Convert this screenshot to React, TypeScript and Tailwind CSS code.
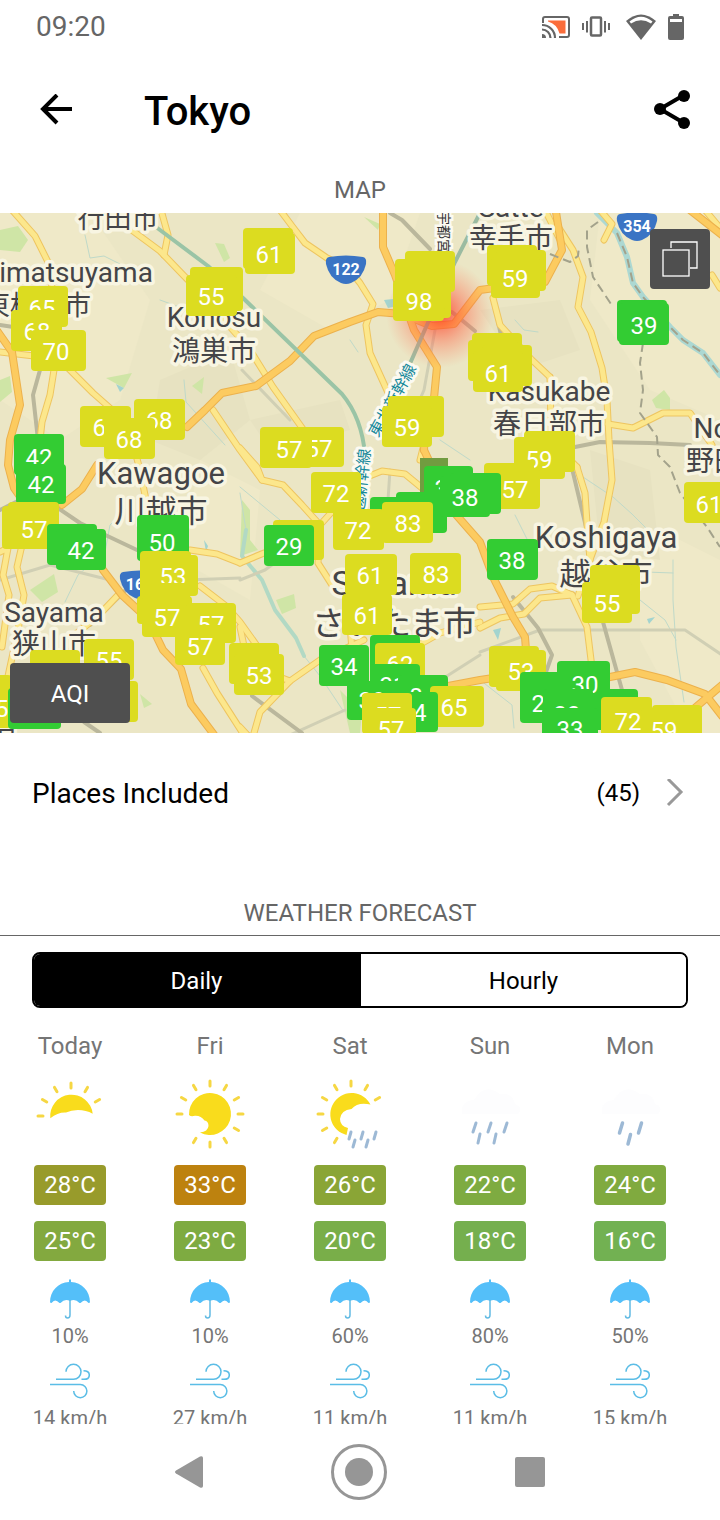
import { useState } from 'react';

type Condition = 'partly' | 'sunny' | 'showers' | 'rain' | 'drizzle';

interface DayForecast {
  day: string;
  condition: Condition;
  high: string;
  highColor: string;
  low: string;
  lowColor: string;
  rain: string;
  wind: string;
}

const forecast: DayForecast[] = [
  { day: 'Today', condition: 'partly', high: '28°C', highColor: 'bg-[#989b2b]', low: '25°C', lowColor: 'bg-[#83a93f]', rain: '10%', wind: '14 km/h' },
  { day: 'Fri', condition: 'sunny', high: '33°C', highColor: 'bg-[#bd820f]', low: '23°C', lowColor: 'bg-[#7eab41]', rain: '10%', wind: '27 km/h' },
  { day: 'Sat', condition: 'showers', high: '26°C', highColor: 'bg-[#8aa536]', low: '20°C', lowColor: 'bg-[#79ae49]', rain: '60%', wind: '11 km/h' },
  { day: 'Sun', condition: 'rain', high: '22°C', highColor: 'bg-[#7eab41]', low: '18°C', lowColor: 'bg-[#75af4e]', rain: '80%', wind: '11 km/h' },
  { day: 'Mon', condition: 'drizzle', high: '24°C', highColor: 'bg-[#80aa3f]', low: '16°C', lowColor: 'bg-[#72b152]', rain: '50%', wind: '15 km/h' },
];

const YELLOW = '#dcdc20';
const GREEN = '#33cc33';
const OLIVE = '#719c40';

interface Pin {
  color: string;
  // each box is [x, y, width, height]
  boxes: number[][];
  value?: string;
  x?: number;
  y?: number;
}

// later pins are stacked on top of earlier ones
const pins: Pin[] = [
  { color: YELLOW, boxes: [[190, 267, 53, 44], [186, 275, 51, 41]], value: '55', x: 211, y: 305 },
  { color: YELLOW, boxes: [[18, 286, 50, 41]], value: '65', x: 42, y: 317 },
  { color: YELLOW, boxes: [[11, 310, 51, 41]], value: '68', x: 37, y: 340 },
  { color: YELLOW, boxes: [[31, 330, 55, 41]], value: '70', x: 56, y: 360 },
  { color: YELLOW, boxes: [[80, 406, 51, 41]], value: '68', x: 106, y: 436 },
  { color: YELLOW, boxes: [[134, 399, 51, 41]], value: '68', x: 159, y: 429 },
  { color: YELLOW, boxes: [[104, 418, 51, 41]], value: '68', x: 129, y: 448 },
  { color: GREEN, boxes: [[14, 434, 50, 41]], value: '42', x: 39, y: 466 },
  { color: GREEN, boxes: [[16, 464, 50, 40]], value: '42', x: 41, y: 493 },
  { color: YELLOW, boxes: [[8, 502, 51, 43], [2, 506, 52, 43]], value: '57', x: 34, y: 538 },
  { color: GREEN, boxes: [[47, 524, 50, 41], [56, 529, 50, 41]], value: '42', x: 81, y: 559 },
  { color: GREEN, boxes: [[137, 515, 52, 46]], value: '50', x: 162, y: 551 },
  { color: YELLOW, boxes: [[140, 551, 51, 41], [147, 555, 51, 41]], value: '53', x: 173, y: 585 },
  { color: YELLOW, boxes: [[140, 583, 50, 41], [137, 596, 50, 28]] },
  { color: YELLOW, boxes: [[142, 596, 50, 41]], value: '57', x: 167, y: 626 },
  { color: YELLOW, boxes: [[186, 603, 50, 40]], value: '57', x: 211, y: 633 },
  { color: YELLOW, boxes: [[175, 625, 50, 40]], value: '57', x: 200, y: 655 },
  { color: YELLOW, boxes: [[229, 643, 50, 41], [234, 654, 50, 41]], value: '53', x: 259, y: 684 },
  { color: YELLOW, boxes: [[84, 639, 50, 41]], value: '55', x: 109, y: 669 },
  { color: YELLOW, boxes: [[30, 650, 50, 41], [88, 681, 50, 41], [-42, 675, 54, 53]], value: '55', x: -5, y: 717 },
  { color: GREEN, boxes: [[8, 688, 53, 41]] },

  { color: YELLOW, boxes: [[243, 228, 50, 41], [245, 233, 50, 41]], value: '61', x: 269, y: 263 },
  { color: YELLOW, boxes: [[405, 251, 50, 41], [395, 259, 50, 41], [401, 277, 50, 41], [395, 270, 50, 41], [393, 280, 51, 41]], value: '98', x: 419, y: 310 },
  { color: YELLOW, boxes: [[388, 396, 56, 41], [382, 406, 50, 41]], value: '59', x: 407, y: 436 },
  { color: YELLOW, boxes: [[294, 427, 50, 40]], value: '57', x: 319, y: 457 },
  { color: YELLOW, boxes: [[260, 427, 52, 41]], value: '57', x: 289, y: 458 },
  { color: OLIVE, boxes: [[420, 458, 28, 41]] },
  { color: GREEN, boxes: [[424, 466, 49, 41]], value: '38', x: 448, y: 497 },
  { color: GREEN, boxes: [[370, 497, 50, 41], [396, 492, 51, 41]] },
  { color: YELLOW, boxes: [[311, 472, 50, 41]], value: '72', x: 336, y: 502 },
  { color: YELLOW, boxes: [[333, 509, 51, 41]], value: '72', x: 358, y: 539 },
  { color: YELLOW, boxes: [[382, 502, 51, 41]], value: '83', x: 408, y: 532 },
  { color: YELLOW, boxes: [[273, 520, 51, 40]] },
  { color: GREEN, boxes: [[264, 525, 50, 41]], value: '29', x: 289, y: 555 },
  { color: YELLOW, boxes: [[345, 554, 52, 41]], value: '61', x: 370, y: 584 },
  { color: YELLOW, boxes: [[410, 553, 51, 41]], value: '83', x: 436, y: 583 },
  { color: YELLOW, boxes: [[342, 594, 50, 41]], value: '61', x: 367, y: 624 },
  { color: GREEN, boxes: [[319, 645, 50, 41]], value: '34', x: 344, y: 675 },
  { color: GREEN, boxes: [[370, 635, 50, 41]] },
  { color: YELLOW, boxes: [[375, 643, 50, 41]], value: '62', x: 400, y: 673 },
  { color: GREEN, boxes: [[370, 664, 50, 41]], value: '31', x: 393, y: 694 },
  { color: GREEN, boxes: [[347, 681, 50, 39]], value: '39', x: 372, y: 709 },
  { color: GREEN, boxes: [[398, 675, 50, 41]], value: '8', x: 416, y: 705 },
  { color: YELLOW, boxes: [[430, 686, 54, 41]], value: '65', x: 454, y: 716 },
  { color: GREEN, boxes: [[388, 692, 50, 40]], value: '34', x: 413, y: 721 },
  { color: YELLOW, boxes: [[362, 693, 50, 41]], value: '57', x: 388, y: 724 },
  { color: YELLOW, boxes: [[366, 708, 50, 41]], value: '57', x: 391, y: 738 },

  { color: YELLOW, boxes: [[487, 245, 50, 41], [496, 250, 50, 41], [491, 257, 49, 41]], value: '59', x: 515, y: 287 },
  { color: YELLOW, boxes: [[472, 333, 50, 41], [468, 340, 50, 41], [482, 345, 50, 41], [473, 351, 50, 41]], value: '61', x: 498, y: 382 },
  { color: GREEN, boxes: [[617, 300, 50, 42], [619, 303, 50, 42]], value: '39', x: 644, y: 334 },
  { color: YELLOW, boxes: [[524, 431, 51, 41], [514, 437, 51, 42]], value: '59', x: 539, y: 468 },
  { color: YELLOW, boxes: [[484, 463, 50, 41], [490, 468, 50, 41]], value: '57', x: 515, y: 498 },
  { color: GREEN, boxes: [[450, 473, 51, 41], [440, 476, 50, 41]], value: '38', x: 465, y: 506 },
  { color: YELLOW, boxes: [[684, 482, 50, 41]], value: '61', x: 709, y: 513 },
  { color: GREEN, boxes: [[487, 539, 51, 41]], value: '38', x: 512, y: 569 },
  { color: YELLOW, boxes: [[590, 565, 50, 49], [582, 582, 50, 41]], value: '55', x: 607, y: 612 },
  { color: YELLOW, boxes: [[489, 646, 50, 41], [496, 650, 50, 41]], value: '53', x: 521, y: 680 },
  { color: GREEN, boxes: [[520, 672, 50, 51], [588, 689, 50, 41]], value: '29', x: 545, y: 712 },
  { color: GREEN, boxes: [[557, 661, 53, 41]], value: '30', x: 585, y: 693 },
  { color: GREEN, boxes: [[543, 689, 50, 41]], value: '33', x: 567, y: 723 },
  { color: GREEN, boxes: [[542, 708, 56, 41]], value: '33', x: 570, y: 738 },
  { color: YELLOW, boxes: [[601, 697, 51, 50]], value: '72', x: 628, y: 730 },
  { color: YELLOW, boxes: [[641, 708, 50, 41], [652, 705, 50, 41]], value: '59', x: 664, y: 739 },
];

const placeLabels = [
  { text: '行田市', x: 118, y: 228, size: 'text-[27px]' },
  { text: 'imatsuyama', x: 76, y: 282, size: 'text-[28px]' },
  { text: '東松山市', x: 37, y: 315, size: 'text-[27px]' },
  { text: 'Konosu', x: 214, y: 327, size: 'text-[28px]' },
  { text: '鴻巣市', x: 214, y: 361, size: 'text-[28px]' },
  { text: 'Satte', x: 511, y: 217, size: 'text-[28px]' },
  { text: '幸手市', x: 511, y: 248, size: 'text-[28px]' },
  { text: 'Kasukabe', x: 549, y: 401, size: 'text-[28px]' },
  { text: '春日部市', x: 549, y: 434, size: 'text-[28px]' },
  { text: 'Noda', x: 727, y: 438, size: 'text-[28px]' },
  { text: '野田市', x: 728, y: 471, size: 'text-[28px]' },
  { text: 'Kawagoe', x: 161, y: 484, size: 'text-[31px]' },
  { text: '川越市', x: 161, y: 522, size: 'text-[31px]' },
  { text: 'Koshigaya', x: 606, y: 548, size: 'text-[31px]' },
  { text: '越谷市', x: 606, y: 585, size: 'text-[31px]' },
  { text: 'Sayama', x: 54, y: 622, size: 'text-[28px]' },
  { text: '狭山市', x: 54, y: 654, size: 'text-[28px]' },
  { text: 'Saitama', x: 394, y: 595, size: 'text-[34px]' },
  { text: 'さいたま市', x: 394, y: 635, size: 'text-[33px]' },
];

const minorRoads = [
  'M12 210L35 236L48 262L54 300',
  'M133 231L160 251L188 280L240 338L252 353L273 387L305 432',
  'M161 210L168 235L164 255',
  'M280 210L292 226L305 243L327 258L348 268L360 283L373 304L366 325L370 353L385 386L398 415',
  'M0 352L34 356',
  'M54 370L50 395L42 422L40 440',
  'M66 366L93 393L110 408L132 440L140 470L146 500',
  'M213 410L240 450L262 480',
  'M240 448L257 467L262 480L283 485L302 505L320 525L318 563L332 585',
  'M320 525L338 505L357 481L382 471L405 474L422 488',
  'M350 560L348 600L352 650',
  'M240 563L264 553',
  'M190 550L217 554L240 563',
  'M0 552L8 548L3 575L9 595L2 647',
  'M22 545L17 567L24 595L18 630L5 690',
  'M120 593L98 616L77 633L60 655',
  'M200 586L226 606L240 622L260 650',
  'M203 668L217 693L242 732',
  'M240 627L248 665L290 681',
  'M364 640L320 660L290 681L260 712L252 740',
  'M410 650L440 633L480 622',
  'M240 727L252 740',
  'M480 607L513 604L530 589L552 586L572 595',
  'M480 628L500 618L524 614L540 598L572 595',
  'M572 595L587 627L592 668',
  'M557 225L573 250L583 277L578 307L591 332L602 368L607 400L609 440L612 480L604 522L588 565L578 596',
  'M577 467L585 493L587 523L590 560',
  'M550 377L551 430L560 450L577 467',
  'M493 298L500 325L532 360L550 377',
  'M608 424L633 428L663 413L690 413L712 445',
  'M545 210L560 240',
  'M600 210L612 224L604 240',
  'M705 210L720 228',
  'M712 275L720 288',
  'M425 440L420 460',
];

const majorRoads = [
  'M-2 332L12 352L20 405L10 440L8 465L14 488L28 508',
  'M62 505L82 489L97 465',
  'M187 427L205 410L222 393L256 386L290 361L314 336L350 322L378 312L402 314L432 326L454 324L480 290L510 286L545 282L562 250L556 212',
  'M383 210L383 247L395 275L414 330L437 367L434 398L426 420L424 450',
  'M424 450L452 510L480 542L493 577L513 617L525 637L526 650',
  'M103 570L122 595L148 619L163 650L181 669L191 704L215 736',
  'M443 687L480 680L500 677',
  'M600 679L635 672L667 680L705 694L722 716',
  'M722 685L690 712L662 736',
  'M690 210L722 235',
];

const greyRoads = [
  'M55 506L80 523L137 550',
  'M390 213L402 220L430 249',
  'M452 312L475 331',
  'M0 325L20 328',
  'M40 370L33 395L38 440',
  'M84 722L100 733',
  'M252 696L302 733',
  'M493 298L502 340',
  'M570 460L592 552',
  'M513 597L538 628L552 655L546 672',
  'M603 622L622 690',
  'M575 447L600 442L650 443L690 445',
  'M0 510L20 500',
  'M130 586L90 625',
];

const lightRoads = [
  'M435 330L424 390L400 445',
  'M242 370L290 420',
  'M480 652L540 630L685 630L722 655',
  'M0 580L50 565L110 580',
  'M390 470L388 500',
  'M240 580L265 570L320 530',
  'M185 580L240 578',
  'M425 690L480 655',
  'M290 735L345 710',
];

const rivers = [
  'M246 530L242 556L262 580L275 610L296 638L304 656',
];

const streams = [
  'M85 235L90 258L104 256L120 264L130 284',
  'M240 493L246 530',
  'M304 656L320 676L344 712',
  'M65 602L78 575L105 552L110 525L135 500',
  'M583 477L613 497L632 514L650 532',
  'M590 570L673 573',
  'M673 560L673 600L676 647L684 702',
  'M515 320L524 330L538 332',
  'M515 515L530 545',
  'M640 600L665 620L676 640',
  'M184 380L186 402L225 445',
  'M160 300L182 308',
  'M350 340L358 352',
  'M282 337L292 346',
  'M480 680L512 705L514 728',
  'M440 440L470 460',
  'M240 487L280 520',
];

const parks = [
  'M0 230L18 226L28 240L20 252L0 250Z',
  'M215 243L224 244L230 258L224 262Z',
  'M106 378L132 373L124 388Z',
  'M30 590L54 574L58 592L42 602Z',
  'M192 386L204 377L202 394Z',
  'M242 500L250 510L250 540L258 550L240 556Z',
  'M276 600L294 594L296 608L282 614Z',
  'M652 400L664 390L670 398L670 410L656 408Z',
  'M140 694L152 704L144 708Z',
  'M0 380L10 376L12 392L0 402Z',
  'M364 217L380 224L378 230Z',
  'M340 690L362 712L360 733L350 733Z',
];

function Shield({ x, y, label, textX = 20 }: { x: number; y: number; label: string; textX?: number }) {
  return (
    <g transform={`translate(${x} ${y})`}>
      <path d="M3 1Q20 -2 37 1Q41 2 40 8Q37 22 25 27Q20 29 15 27Q3 22 0 8Q-1 2 3 1Z" fill="#3a74c4" />
      <text x={textX} y="19" textAnchor="middle" className="fill-white text-[16px] font-bold">{label}</text>
    </g>
  );
}

function MapView() {
  return (
    <svg viewBox="0 213 720 520" className="block w-full h-auto bg-[#ebe6c5]" role="img" aria-label="Air quality map">
      <defs>
        <radialGradient id="heat">
          <stop offset="0" stopColor="#ff3b20" stopOpacity="0.85" />
          <stop offset="0.5" stopColor="#ff5a40" stopOpacity="0.4" />
          <stop offset="1" stopColor="#ff7a5c" stopOpacity="0" />
        </radialGradient>
      </defs>

      {/* Terrain */}
      <g fill="#efe9c8">
        <path d="M0 213H90L150 300L120 400L60 440L0 400Z" />
        <path d="M300 213H420L390 300L330 330L260 290Z" />
        <path d="M600 213H720V420L650 390L590 300Z" />
        <path d="M640 520L720 560V733H690L640 640Z" />
        <path d="M200 460L260 490L250 600L180 560Z" />
      </g>
      <g fill="#e7e2c1">
        <path d="M160 380L230 350L250 420L200 460L150 440Z" />
        <path d="M480 310L560 300L580 350L520 370Z" />
        <path d="M590 450L650 470L660 560L600 550Z" />
        <path d="M250 420L340 400L350 430L270 450Z" />
      </g>
      <g fill="#cfe5a6">{parks.map((d) => <path key={d} d={d} />)}</g>
      <g fill="#a3d4cf">
        <path d="M116 384L124 388L120 392Z" />
        <path d="M384 300L393 299L397 306L388 308Z" />
        <path d="M493 630L501 628L498 640Z" />
        <path d="M647 619L655 617L649 624Z" />
        <path d="M204 540L208 546L206 552Z" />
      </g>

      {/* Water, rail and roads */}
      <g fill="none" strokeLinejoin="round" strokeLinecap="round">
        <g stroke="#bfd9c9" strokeWidth="1">{streams.map((d) => <path key={d} d={d} />)}</g>
        <g stroke="#b2d9c4" strokeWidth="4">{rivers.map((d) => <path key={d} d={d} />)}</g>
        <path d="M597 213L617 233L627 257L633 283L643 297L670 327L683 340L703 353L720 375" stroke="#acd8d2" strokeWidth="6" />
        <g stroke="#d0cfb4" strokeWidth="3">{lightRoads.map((d) => <path key={d} d={d} />)}</g>
        <g stroke="#bab79c" strokeWidth="4">{greyRoads.map((d) => <path key={d} d={d} />)}</g>
        <g stroke="#eec560" strokeWidth="7">{minorRoads.map((d) => <path key={d} d={d} />)}</g>
        <g stroke="#fce78c" strokeWidth="5">{minorRoads.map((d) => <path key={d} d={d} />)}</g>
        <g stroke="#ecb14c" strokeWidth="8">{majorRoads.map((d) => <path key={d} d={d} />)}</g>
        <g stroke="#fccb60" strokeWidth="6">{majorRoads.map((d) => <path key={d} d={d} />)}</g>
        <path d="M156 227L208 266L243 298L342 394Q362 418 365 455" stroke="#9ac4a6" strokeWidth="4" />
        <path d="M405 375L430 318L455 262L480 213" stroke="#9bbba1" strokeWidth="4" />
        <g stroke="#a3a28b" strokeWidth="2" strokeLinecap="butt" strokeDasharray="9 5">
          <path d="M598 222L587 230L587 247L593 277L613 307M643 343L640 363L643 390L640 413L657 437L658 455L670 467L680 493L707 527L720 547" />
          <path d="M617 233L627 257L633 283L643 297L670 327L683 340L703 353L720 375" />
          <path d="M550 254L570 262L578 256L579 246" />
        </g>
      </g>

      <circle cx="440" cy="314" r="54" fill="url(#heat)" />

      {/* Line names */}
      <g className="text-[16px]" fill="#16889a" stroke="#fbfaf2" strokeWidth="6" strokeLinejoin="round" paintOrder="stroke">
        <text transform="translate(378 438) rotate(-61)">東北新幹線</text>
        <text transform="translate(362 529) rotate(-84)">上越新幹線</text>
      </g>
      <text transform="translate(439 211) rotate(90)" className="text-[14px]" fill="#333" stroke="#fbfaf2" strokeWidth="5" paintOrder="stroke">宇都宮線</text>

      {/* Place names */}
      <g textAnchor="middle" fill="#444447" stroke="#f8f5e2" strokeWidth="7" strokeLinejoin="round" paintOrder="stroke">
        {placeLabels.map((label) => (
          <text key={label.text} x={label.x} y={label.y} className={label.size}>{label.text}</text>
        ))}
        <text x="-12" y="752" className="text-[28px]">所沢</text>
      </g>

      <Shield x={326} y={256} label="122" />
      <Shield x={617} y={213} label="354" />
      <Shield x={120} y={571} label="16" textX={15} />

      {/* AQI stations */}
      {pins.map((pin, index) => (
        <g key={index}>
          {pin.boxes.map(([x, y, w, h], i) => (
            <rect key={i} x={x} y={y} width={w} height={h} rx={pin.color === OLIVE ? 0 : 4} fill={pin.color} />
          ))}
          {pin.value && (
            <text x={pin.x} y={pin.y} textAnchor="middle" className="fill-white text-[24px]">{pin.value}</text>
          )}
        </g>
      ))}
    </svg>
  );
}

function Rays({ cx, cy, angles }: { cx: number; cy: number; angles: number[] }) {
  return (
    <g stroke="#f6d743" strokeWidth="3" strokeLinecap="round">
      {angles.map((a) => (
        <line key={a} x1={cx + 28} y1={cy} x2={cx + 33} y2={cy} transform={`rotate(${-a} ${cx} ${cy})`} />
      ))}
    </g>
  );
}

function WeatherIcon({ condition }: { condition: Condition }) {
  return (
    <svg viewBox="0 0 80 80" className="w-20 h-20 mt-3" fill="none" role="img" aria-label={condition}>
      {condition === 'partly' && (
        <>
          <Rays cx={41} cy={42} angles={[30, 60, 90, 120, 150, 180]} />
          <path d="M20.300 44.300A21.300 21.300 0 1 1 62.700 39.700Q56 36 48 36Q41 36 36 38.500Q28 38 20.300 44.300Z" fill="#f9dc1c" />
        </>
      )}
      {condition === 'sunny' && (
        <>
          <Rays cx={40} cy={40} angles={[0, 30, 60, 90, 120, 150, 180, 240, 270, 300, 330]} />
          <path d="M19 41A21 21 0 1 1 30 58.500Q38 57.500 38.500 52Q38.500 47 34.500 46.500Q31 41.500 25 41.800Q21 43 19 41Z" fill="#f9dc1c" />
        </>
      )}
      {condition === 'showers' && (
        <>
          <Rays cx={41} cy={40} angles={[30, 60, 90, 120, 150, 180, 210, 240]} />
          <path d="M60.500 30.500A21.300 21.300 0 1 0 36.500 61L38 54Q30 52 30 45Q31 36 41.500 35Q48 27.500 60.500 30.500Z" fill="#f9dc1c" />
          <path d="M41 58L39 65M45 66L43 73M53 58L51 65M58 66L56 73M66 58L64 65" stroke="#9db9d5" strokeWidth="3" strokeLinecap="round" />
        </>
      )}
      {condition === 'rain' && (
        <>
          <path d="M12 40Q10 27 24 26Q34 8 50 20Q62 18 65 30Q74 34 68 40Z" fill="#fdfdfe" />
          <path d="M26 49L23 58M30 60L28 69M41 49L38 58M46 60L44 69M57 49L54 58" stroke="#9db9d5" strokeWidth="3" strokeLinecap="round" />
        </>
      )}
      {condition === 'drizzle' && (
        <>
          <path d="M12 40Q10 27 24 26Q34 8 50 20Q62 18 65 30Q74 34 68 40Z" fill="#fdfdfe" />
          <path d="M32.500 49L29.500 59M40.500 60.500L38 70M51.500 49L48.500 59" stroke="#9db9d5" strokeWidth="3.500" strokeLinecap="round" />
        </>
      )}
    </svg>
  );
}

function UmbrellaIcon() {
  return (
    <svg viewBox="0 0 40 40" className="w-10 h-10 mt-[18px]" fill="none" aria-hidden="true">
      <path d="M19 0.500H21V3C32 3.500 40 12 40 23.500L38.500 24Q35 19 30.500 24H29.500Q25 19 20 22Q15 19 10.500 24H9.500Q5 19 1.500 24L0 23.500C0 12 8 3.500 19 3Z" fill="#54bff9" />
      <path d="M20 21V36Q20 39 17.500 39Q15.500 39 15.500 36.500" stroke="#63bbe3" strokeWidth="1.500" />
    </svg>
  );
}

function WindIcon() {
  return (
    <svg viewBox="0 0 40 40" className="w-10 h-10 mt-[13px]" fill="none" stroke="#5bbde6" strokeWidth="1.500" aria-hidden="true">
      <path d="M6 18.300H23.500A7.500 7.500 0 1 0 16 10.800" />
      <path d="M33.500 9.700Q39.300 9.700 39.300 14Q39.300 18.300 34 18.300H31.500" />
      <path d="M0 23.500H30.300A6.600 6.600 0 1 1 23.700 30.100" />
    </svg>
  );
}

function StatusBar() {
  return (
    <div className="h-[54px] shrink-0 flex items-center justify-between pl-9 pr-9 text-[#666]">
      <span className="text-[28px] leading-8">09:20</span>
      <div className="flex items-center gap-3">
        <svg viewBox="0 0 28 24" className="w-7 h-6" fill="none" aria-hidden="true">
          <path d="M6 5.500H23.500V18.500H17.500Q15 9 6 6.500Z" fill="#fb6d3b" />
          <path d="M1 8V4Q1 2 3 2H25Q27 2 27 4V20Q27 22 25 22H17" stroke="#666" strokeWidth="2" />
          <path d="M0 10A13 13 0 0 1 13 23M0 14.500A8.500 8.500 0 0 1 8.500 23" stroke="#666" strokeWidth="2.200" />
          <path d="M0 19A4 4 0 0 1 4 23H0Z" fill="#666" />
        </svg>
        <svg viewBox="0 0 28 24" className="w-7 h-6" fill="none" stroke="#666" aria-hidden="true">
          <rect x="9" y="2.500" width="10" height="18" rx="1" strokeWidth="2.500" />
          <path d="M1 8V15M27 8V15M5 6V17.500M23 6V17.500" strokeWidth="2" />
        </svg>
        <svg viewBox="0 0 30 26" className="w-[30px] h-[26px] ml-1" aria-hidden="true">
          <path d="M0 7Q15 -6 30 7L15 26Z" fill="#666" />
          <path d="M3.500 7.500Q15 -2 26.500 7.500L25 9.500Q15 3 5 9.500Z" fill="#fff" />
        </svg>
        <svg viewBox="0 0 16 26" className="w-4 h-[26px]" aria-hidden="true">
          <path d="M5 0H11V2H14Q16 2 16 4V24Q16 26 14 26H2Q0 26 0 24V4Q0 2 2 2H5Z" fill="#666" />
          <path d="M2 5H14V8H2Z" fill="#fff" />
        </svg>
      </div>
    </div>
  );
}

export default function App() {
  const [mode, setMode] = useState<'daily' | 'hourly'>('daily');

  return (
    <div className="h-screen flex flex-col bg-white text-black overflow-hidden font-['Roboto','Noto_Sans_CJK_JP',sans-serif]">
      <StatusBar />

      {/* Title bar */}
      <header className="h-28 shrink-0 flex items-center pl-10 pr-[30px]">
        <button type="button" aria-label="Back">
          <svg viewBox="0 0 32 32" className="block w-8 h-8" fill="none" stroke="#000" strokeWidth="4" aria-hidden="true">
            <path d="M32 15H3M17 1L3 15L17 29" />
          </svg>
        </button>
        <h1 className="flex-1 ml-[72px] pt-1 text-[40px] leading-[48px] font-medium">Tokyo</h1>
        <button type="button" aria-label="Share">
          <svg viewBox="0 0 36 40" className="block w-9 h-10" aria-hidden="true">
            <path d="M30 5L6 19L30 33" fill="none" stroke="#000" strokeWidth="4" />
            <circle cx="30" cy="6" r="6" />
            <circle cx="6" cy="19" r="6" />
            <circle cx="30" cy="33" r="6" />
          </svg>
        </button>
      </header>

      <main className="flex-1 min-h-0 overflow-y-auto [scrollbar-width:none]">
        <h2 className="h-[47px] flex items-center justify-center text-2xl text-[#666]">MAP</h2>
        <div className="relative overflow-hidden">
          <MapView />
          <button
            type="button"
            aria-label="Map layers"
            className="absolute right-[10px] top-4 w-[60px] h-[60px] rounded bg-[#4f4f4f] flex items-center justify-center"
          >
            <svg viewBox="0 0 36 36" className="w-9 h-9" fill="none" stroke="#fff" strokeWidth="1.300" aria-hidden="true">
              <path d="M9 7V1H35V27H28" />
              <rect x="1" y="9" width="26" height="26" />
            </svg>
          </button>
          <button
            type="button"
            className="absolute left-[10px] bottom-[10px] w-[120px] h-[60px] pt-[2px] rounded bg-[#4f4f4f] text-white text-2xl"
          >
            AQI
          </button>
        </div>

        <button type="button" className="w-full h-[120px] flex items-center pl-8 pr-9 text-left">
          <span className="flex-1 pt-[2px] text-[28px] leading-8">Places Included</span>
          <span className="text-2xl">(45)</span>
          <svg viewBox="0 0 18 28" className="w-[18px] h-7 ml-[26px]" fill="none" stroke="#999" strokeWidth="3" aria-hidden="true">
            <path d="M2 0L15 13L2 26" />
          </svg>
        </button>

        {/* Forecast */}
        <h2 className="pt-11 pb-[6px] text-center text-2xl text-[#666] border-b border-[#666]">WEATHER FORECAST</h2>
        <div role="tablist" className="mt-4 mx-8 h-14 flex border-2 border-black rounded-lg overflow-hidden">
          <button
            type="button"
            role="tab"
            aria-selected={mode === 'daily'}
            onClick={() => setMode('daily')}
            className={`flex-1 pt-[2px] text-2xl border-r-2 border-black ${mode === 'daily' ? 'bg-black text-white' : 'bg-white text-black'}`}
          >
            Daily
          </button>
          <button
            type="button"
            role="tab"
            aria-selected={mode === 'hourly'}
            onClick={() => setMode('hourly')}
            className={`flex-1 pt-[2px] text-2xl ${mode === 'hourly' ? 'bg-black text-white' : 'bg-white text-black'}`}
          >
            Hourly
          </button>
        </div>

        <div className="mt-[22px] pr-5 grid grid-cols-5">
          {forecast.map((item) => (
            <div key={item.day} className="flex flex-col items-center text-[#757575]">
              <p className="text-2xl">{item.day}</p>
              <WeatherIcon condition={item.condition} />
              <span className={`mt-[11px] h-10 px-[10px] rounded text-white text-2xl leading-[41px] ${item.highColor}`}>{item.high}</span>
              <span className={`mt-4 h-10 px-[10px] rounded text-white text-2xl leading-[41px] ${item.lowColor}`}>{item.low}</span>
              <UmbrellaIcon />
              <p className="mt-[5px] text-[20px] leading-6">{item.rain}</p>
              <WindIcon />
              <p className="mt-[5px] text-[20px] leading-6">{item.wind}</p>
            </div>
          ))}
        </div>
      </main>

      {/* System navigation */}
      <nav className="h-24 shrink-0 flex items-center justify-center gap-32">
        <button type="button" aria-label="System back">
          <svg viewBox="0 0 28 32" className="block w-7 h-8" aria-hidden="true">
            <path d="M1 14.500L25 0.500Q28 -0.500 28 2V30Q28 32.500 25 31.500L1 17.500Q-1 16 1 14.500Z" fill="#969696" />
          </svg>
        </button>
        <button type="button" aria-label="Home">
          <svg viewBox="0 0 56 56" className="block w-14 h-14" aria-hidden="true">
            <circle cx="28" cy="28" r="26.500" fill="none" stroke="#969696" strokeWidth="3" />
            <circle cx="28" cy="28" r="14" fill="#969696" />
          </svg>
        </button>
        <button type="button" aria-label="Recent apps">
          <span className="block w-[30px] h-[30px] rounded-xs bg-[#969696]" />
        </button>
      </nav>
    </div>
  );
}
